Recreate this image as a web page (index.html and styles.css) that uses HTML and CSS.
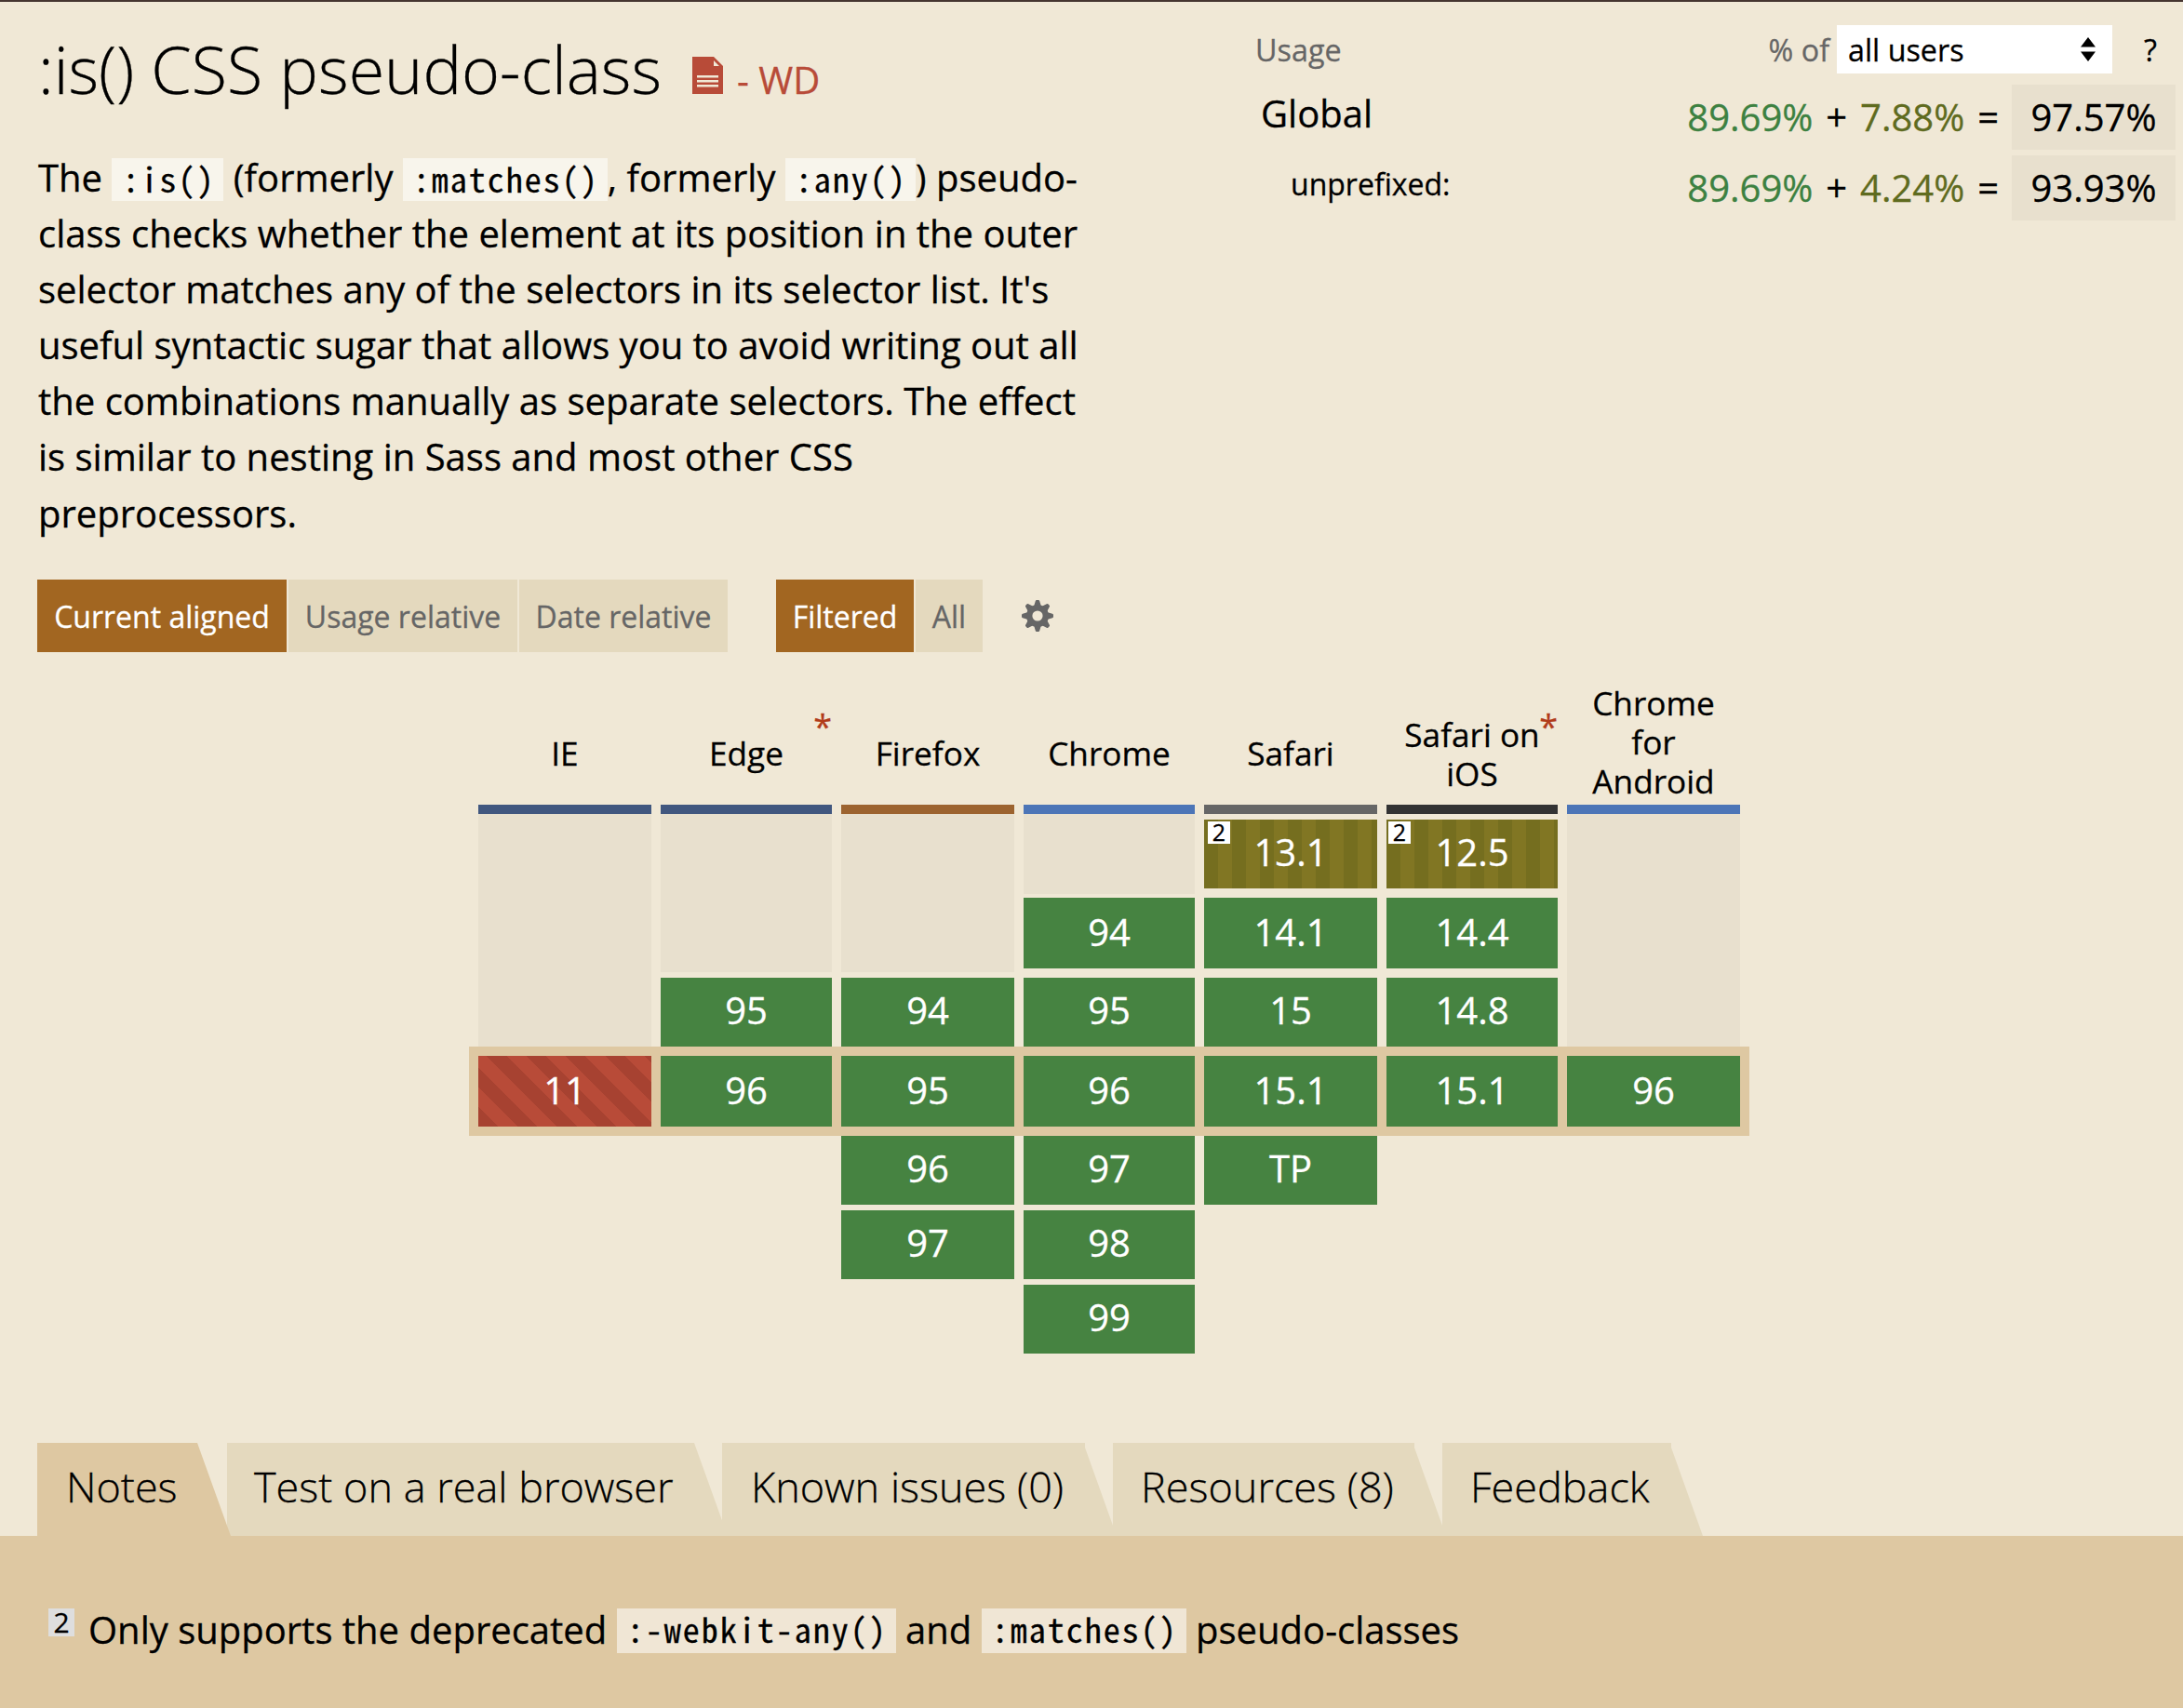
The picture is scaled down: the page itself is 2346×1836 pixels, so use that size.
FILE: index.html
```html
<!DOCTYPE html>
<html lang="en">
<head>
<meta charset="utf-8">
<title>:is() CSS pseudo-class</title>
<link rel="stylesheet" href="styles.css">
</head>
<body>
<main class="feature">
  <header class="top">
    <section class="intro">
      <h1 class="title">
        <span class="title-text">:is() CSS pseudo-class</span>
        <a class="spec">
          <svg class="doc" viewBox="0 0 33 40"><path fill="#b84b38" d="M0 0h23l10 10v30H0z"/><path fill="#f0e8d6" d="M23 4v6h6zM5 20h23v2.500H5zM5 25h23v2.500H5zM5 30h23v2.500H5z"/></svg>
          <span>- WD</span>
        </a>
      </h1>
      <p class="desc">The <code>:is()</code> (formerly <code>:matches()</code>, formerly <code>:any()</code>) pseudo-<br>class checks whether the element at its position in the outer<br>selector matches any of the selectors in its selector list. It's<br>useful syntactic sugar that allows you to avoid writing out all<br>the combinations manually as separate selectors. The effect<br>is similar to nesting in Sass and most other CSS<br>preprocessors.</p>
    </section>
    <section class="usage">
      <div class="usage-head">
        <span class="usage-label">Usage</span>
        <span class="of">% of</span>
        <div class="select"><span>all users</span><svg class="arrows" viewBox="0 0 16 26"><path d="M8 0l8 10.500H0zM8 26L0 15.500h16z"/></svg></div>
        <span class="help">?</span>
      </div>
      <div class="usage-row">
        <span class="region">Global</span>
        <span class="sum"><b class="yes">89.69%</b> + <b class="part">7.88%</b> =</span>
        <span class="total">97.57%</span>
      </div>
      <div class="usage-row">
        <span class="region region-sub">unprefixed:</span>
        <span class="sum"><b class="yes">89.69%</b> + <b class="part">4.24%</b> =</span>
        <span class="total">93.93%</span>
      </div>
    </section>
  </header>

  <nav class="modes">
    <div class="group">
      <span class="mode on m1">Current aligned</span><span class="mode m2">Usage relative</span><span class="mode m3">Date relative</span>
    </div>
    <div class="group">
      <span class="mode on m4">Filtered</span><span class="mode m5">All</span>
    </div>
    <svg class="gear" viewBox="-17 -17 34 34"><g fill="#666"><path id="tooth" d="M-4-10L-2.200-16q.3-1 1.200-1h2q.9 0 1.200 1L4-10V10L2.200 16q-.3 1-1.200 1h-2q-.9 0-1.200-1L-4 10z"/><use href="#tooth" transform="rotate(45)"/><use href="#tooth" transform="rotate(90)"/><use href="#tooth" transform="rotate(135)"/><circle r="12"/></g><circle r="5.600" fill="#f0e8d6"/></svg>
  </nav>

  <section class="support">
    <div class="current-band"></div>
    <div class="col">
      <h4 class="name c-ie">IE</h4>
      <div class="old"><i class="blank"></i></div>
      <div class="cell now no">11</div>
    </div>
    <div class="col">
      <h4 class="name c-ie">Edge<sup class="star">*</sup></h4>
      <div class="old"><i class="blank b2"></i><div class="cell">95</div></div>
      <div class="cell now">96</div>
    </div>
    <div class="col">
      <h4 class="name c-ff">Firefox</h4>
      <div class="old"><i class="blank b2"></i><div class="cell">94</div></div>
      <div class="cell now">95</div>
      <div class="cell next">96</div>
      <div class="cell next">97</div>
    </div>
    <div class="col">
      <h4 class="name c-chrome">Chrome</h4>
      <div class="old"><i class="blank b1"></i><div class="cell mid">94</div><div class="cell">95</div></div>
      <div class="cell now">96</div>
      <div class="cell next">97</div>
      <div class="cell next">98</div>
      <div class="cell next">99</div>
    </div>
    <div class="col">
      <h4 class="name c-safari">Safari</h4>
      <div class="old"><div class="cell part-cell"><sup class="note">2</sup>13.1</div><div class="cell mid">14.1</div><div class="cell">15</div></div>
      <div class="cell now">15.1</div>
      <div class="cell next">TP</div>
    </div>
    <div class="col">
      <h4 class="name two c-ios">Safari on<br>iOS<sup class="star">*</sup></h4>
      <div class="old"><div class="cell part-cell"><sup class="note note-ios">2</sup>12.5</div><div class="cell mid">14.4</div><div class="cell">14.8</div></div>
      <div class="cell now">15.1</div>
    </div>
    <div class="col">
      <h4 class="name tall c-chrome">Chrome<br>for<br>Android</h4>
      <div class="old"><i class="blank"></i></div>
      <div class="cell now">96</div>
    </div>
  </section>

  <nav class="tabs">
    <span class="tab active t1">Notes</span>
    <span class="tab t2">Test on a real browser</span>
    <span class="tab t3">Known issues (0)</span>
    <span class="tab t4">Resources (8)</span>
    <span class="tab t5">Feedback</span>
  </nav>
  <section class="panel">
    <span class="num">2</span>
    <p class="panel-text">Only supports the deprecated <code>:-webkit-any()</code> and <code>:matches()</code> pseudo-classes</p>
  </section>
</main>
</body>
</html>
```
FILE: styles.css
```css
* { box-sizing: border-box; }
body {
  margin: 0;
  background: #f0e8d6;
  color: #000;
  font-family: "Open Sans", sans-serif;
  font-size: 40px;
  -webkit-text-stroke: .3px;
}
.feature {
  display: flex;
  flex-direction: column;
  height: 1836px;
  border-top: 2px solid #453530;
  overflow: hidden;
}
.top { display: flex; height: 621px; }
.intro { width: 1300px; padding-left: 41px; }
.title {
  display: flex;
  align-items: baseline;
  margin: 0;
  height: 150px;
  padding-top: 27px;
  font-weight: 300;
  font-size: 70px;
  line-height: 90px;
  white-space: nowrap;
}
.title-text { width: 703px; }
.spec {
  display: flex;
  align-items: baseline;
  gap: 15px;
  font-size: 40px;
  font-weight: 400;
  color: #b84b38;
}
.doc { width: 33px; height: 40px; }
.desc { margin: 9px 0 0; line-height: 60.100px; white-space: nowrap; }
code {
  display: inline-block;
  position: relative;
  top: 1px;
  height: 46px;
  padding: 0 9px 0 11px;
  background: rgba(255, 255, 255, .55);
  font-family: "Noto Sans Mono CJK SC", "Liberation Mono", monospace;
  font-size: 36px;
  letter-spacing: 2px;
  line-height: 43px;
}
.usage { flex: 1; padding: 25px 8px 0 49px; }
.usage-head {
  display: flex;
  align-items: center;
  height: 52px;
  font-size: 32.300px;
  line-height: 50px;
  color: #666;
}
.usage-label { flex: 1; }
.of { margin-right: 8px; }
.select {
  display: flex;
  align-items: center;
  justify-content: space-between;
  width: 296px;
  height: 52px;
  padding: 0 18px 0 12px;
  background: #fff;
  color: #000;
}
.arrows { width: 16px; height: 26px; }
.help { width: 68px; padding-left: 34px; color: #000; }
.usage-row {
  display: flex;
  align-items: center;
  height: 70px;
  margin-top: 12px;
  padding-left: 6px;
}
.usage-row + .usage-row { margin-top: 6px; }
.region { flex: 1; padding-bottom: 10px; }
.region-sub { padding-left: 32px; font-size: 32px; }
.sum { margin-right: 14px; padding-bottom: 1px; word-spacing: 3.500px; }
.sum b { font-weight: 400; }
.yes { color: #3d8141; }
.part { color: #5f6b1f; }
.total {
  width: 176px;
  height: 70px;
  line-height: 69px;
  text-align: center;
  background: #e8e0ce;
}
.modes { display: flex; height: 78px; padding-left: 40px; font-size: 32px; }
.group { display: flex; gap: 2px; margin-right: 52px; }
.mode {
  height: 78px;
  line-height: 80px;
  text-align: center;
  background: #e4d9be;
  color: #666;
}
.on { background: #a26621; color: #fff; }
.m1 { width: 268px; }
.m2 { width: 246px; }
.m3 { width: 224px; }
.m4 { width: 148px; }
.m5 { width: 72px; }
.gear { width: 34px; height: 34px; margin: 22px 0 0 -10px; }
.support {
  position: relative;
  display: grid;
  grid-template-columns: 186px 184px 186px 184px 186px 184px 186px;
  column-gap: 10px;
  margin-left: 514px;
  height: 850px;
}
.current-band {
  position: absolute;
  left: -10px;
  top: 424px;
  width: 1376px;
  height: 96px;
  background: #dec8a2;
}
.col { position: relative; padding-top: 28px; }
.name {
  position: relative;
  display: flex;
  align-items: center;
  justify-content: center;
  height: 146px;
  margin: 0;
  padding-top: 24px;
  border-bottom: 10px solid;
  font-size: 35.200px;
  font-weight: 400;
  line-height: 42px;
  text-align: center;
}
.two { padding-top: 26px; }
.tall { padding-top: 0; }
.c-ie { border-color: #41577f; }
.c-ff { border-color: #9c632f; }
.c-chrome { border-color: #4c75b7; }
.c-safari { border-color: #666; }
.c-ios { border-color: #333; }
.star {
  position: absolute;
  right: 0;
  top: 31px;
  color: #b13b1a;
  font-size: 36px;
}
.old { display: flex; flex-direction: column; height: 250px; justify-content: flex-end; }
.blank { flex: 1; background: #e8e0ce; }
.b1 { flex: none; height: 86px; margin-bottom: 4px; }
.b2 { margin-bottom: 6px; }
.cell {
  position: relative;
  height: 74px;
  line-height: 70px;
  text-align: center;
  background: #468341;
  color: #fff;
}
.mid { height: 76px; margin-bottom: 10px; line-height: 73px; }
.now { height: 76px; margin: 10px 0; line-height: 74px; }
.next { margin-bottom: 6px; }
.no { background: repeating-linear-gradient(45deg, #a74231 0 15px, #b84b38 15px 30px); }
.part-cell {
  margin-bottom: 10px;
  background: repeating-linear-gradient(90deg, #756e1f 0 15px, #817623 15px 30px);
}
.note {
  position: absolute;
  left: 4px;
  top: 2px;
  width: 24px;
  height: 24px;
  line-height: 22px;
  font-size: 25px;
  background: #fff;
  color: #000;
}
.note-ios { left: 2px; }
.tabs {
  display: flex;
  height: 100px;
  margin-left: 40px;
  font-weight: 300;
  font-size: 45px;
  line-height: 94px;
}
.tab {
  height: 100px;
  padding-left: 30px;
  background: #e4d9be;
  white-space: nowrap;
  clip-path: polygon(0 0, calc(100% - 34px) 0, calc(100% - 34px) 5px, 100% 100%, 0 100%);
}
.t1, .t2 { clip-path: polygon(0 0, calc(100% - 36px) 0, 100% 100%, 0 100%); }
.t1 { width: 208px; padding-left: 31px; z-index: 1; }
.t2 { width: 538px; margin-left: -4px; padding-left: 29px; }
.t3 { width: 424px; margin-left: -6px; padding-left: 31px; }
.t4 { width: 358px; margin-left: -4px; }
.t5 { width: 280px; margin-left: -4px; }
.active { background: #dec8a2; }
.panel { display: flex; flex: 1; padding: 69px 0 0 52px; background: #dec8a2; }
.num {
  width: 28px;
  height: 30px;
  margin: 9px 15px 0 0;
  background: #dedede;
  font-size: 30px;
  line-height: 29px;
  text-align: center;
}
.panel-text { margin: 0; line-height: 64px; white-space: nowrap; }
.panel code { top: -1px; height: 48px; }
```
